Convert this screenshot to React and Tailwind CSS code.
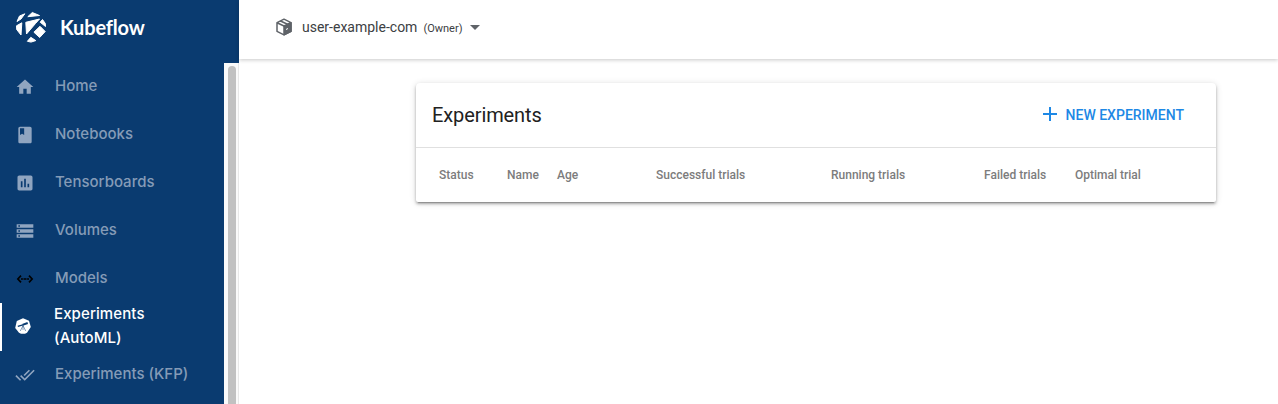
import React from "react";

const items = [
  { label: "Home", icon: "M10 20v-6h4v6h5v-8h3L12 3 2 12h3v8z" },
  { label: "Notebooks", icon: "M18 2H6c-1.100 0-2 .9-2 2v16c0 1.100.9 2 2 2h12c1.100 0 2-.9 2-2V4c0-1.100-.9-2-2-2zM6 4h5v8l-2.500-1.500L6 12V4z" },
  { label: "Tensorboards", icon: "M19 3H5c-1.100 0-2 .9-2 2v14c0 1.100.9 2 2 2h14c1.100 0 2-.9 2-2V5c0-1.100-.9-2-2-2zM9 17H7v-7h2v7zm4 0h-2V7h2v10zm4 0h-2v-4h2v4z" },
  { label: "Volumes", icon: "M2 20h20v-4H2v4zm2-3h2v2H4v-2zM2 4v4h20V4H2zm4 3H4V5h2v2zm-4 7h20v-4H2v4zm2-3h2v2H4v-2z" },
  { label: "Models", dark: true },
  { label: "Experiments (AutoML)", active: true },
  { label: "Experiments (KFP)", icon: "M18 7l-1.410-1.410-6.340 6.340 1.410 1.410L18 7zm4.240-1.410L11.660 16.170 7.480 12l-1.410 1.410L11.660 19l12-12-1.420-1.410zM.41 13.410L6 19l1.410-1.410L1.830 12 .41 13.410z" },
];

function Logo() {
  return (
    <svg className="h-8 w-8 shrink-0" viewBox="0 0 32 32" fill="white" stroke="white" strokeWidth="1" strokeLinejoin="round">
      <path d="M12.800 5.700 17.300 1.500 24.500 4.500z" />
      <path d="M2 10.500 4.500 5 9.800 2.800 6 8z" />
      <path d="M1.500 14.800 6.800 11.800 6 24 1.700 18.500z" />
      <path d="M10.800 11.300 24.500 8 20.500 12.500 11.500 23z" />
      <path d="M27.500 8.500 30.300 12.500 30.500 15.500 25.200 11.200z" />
      <path d="m25 15.300 5.200 5.200-5.500 6-5.800-5.300z" />
      <path d="m15.800 26.300 5 3.300-4.800 1.500-3.600-.8z" />
    </svg>
  );
}

function Telescope() {
  return (
    <svg className="h-4 w-4" viewBox="0 0 16 16">
      <path d="M8 .2 14 2.800 15.800 9 12 14.800 10 15.700H6L4 14.800.2 10 1.800 3z" fill="white" />
      <path d="m2.800 8.300 5-1.500" stroke="#0a3b70" strokeWidth="1.300" />
      <path d="m7.500 6.900 5.200-1.900" stroke="#0a3b70" strokeWidth="2" />
      <path d="M8 7.500 5.300 13M8 7.500v4.500M8 7.500l2.700 5.500" fill="none" stroke="#0a3b70" strokeWidth=".5" />
    </svg>
  );
}

function Icon({ item }) {
  if (item.active) return <Telescope />;
  if (item.dark) {
    return (
      <svg viewBox="0 0 20 20" className="h-5 w-5 shrink-0" fill="none" stroke="black" strokeWidth="1.700">
        <path d="M6 6.700 2.900 10 6 13.300M14 6.700 17.100 10 14 13.300" />
        <path d="M6 10h1.900M8.500 10h3M12.100 10H14" />
      </svg>
    );
  }
  return <svg viewBox="0 0 24 24" className="h-5 w-5 shrink-0 fill-[#90a5c0]"><path d={item.icon} /></svg>;
}

function NavItem({ item }) {
  return (
    <li className={`flex h-12 items-center text-[15px] font-medium leading-6 ${item.active ? "border-l-2 border-white pl-[11px] text-white" : "pl-[15px] text-[#859bb7]"}`}>
      <span className={`flex w-5 shrink-0 justify-center ${item.active ? "pb-[3px]" : ""}`}>
        <Icon item={item} />
      </span>
      <span className={`pb-[2px] ${item.active ? "ml-[21px] w-[120px] tracking-[0.1px]" : "ml-[20px] whitespace-nowrap"}`}>{item.label}</span>
    </li>
  );
}

export default function App() {
  return (
    <div className="flex h-[404px] overflow-hidden bg-white font-['Roboto',sans-serif] text-[#212121]">
      <aside className="flex w-[239px] shrink-0 flex-col bg-[#0a3b70]">
        <div className="flex h-[63px] shrink-0 items-start gap-[13px] pl-[15px] pt-[11px] font-['Lato',sans-serif] text-white">
          <Logo />
          <span className="text-[20px] font-bold leading-8 tracking-[-0.15px]">Kubeflow</span>
        </div>
        <div className="flex min-h-0 flex-1 font-['Inter',sans-serif]">
          <ul className="w-[224px] shrink-0">{items.map((item) => <NavItem key={item.label} item={item} />)}</ul>
          <div className="w-[15px] overflow-hidden border-r border-[#e8e8e8] bg-[#fafafa] pl-[4px] pt-[3px]">
            <div className="h-[500px] w-2 rounded-full bg-[#c1c1c1]" />
          </div>
        </div>
      </aside>
      <main className="min-w-0 flex-1">
        <header className="flex h-[59px] items-start pl-[37px] pt-[15px] text-[#3c4043] shadow-[0_1px_4px_rgba(0,0,0,0.22)]">
          <svg className="-ml-px mr-px mt-[3px] h-[18px] w-[18px]" viewBox="0 0 18 18" fill="none" stroke="#5f6368" strokeWidth="1.500" strokeLinejoin="round">
            <path d="M9 1.200 16 4.700v8.600L9 16.800l-7-3.500V4.700zM2 4.700 9 8l7-3.300M5.500 3 12.500 6.300" />
            <path d="M9 8v8.800l7-3.500V4.700z" fill="#5f6368" />
            <path d="m11 11.500 2-1" stroke="white" strokeWidth="1" />
          </svg>
          <span className="ml-2 text-[14px] leading-6">user-example-com</span>
          <span className="ml-[6px] pt-px text-[11px] leading-[25px]">(Owner)</span>
          <svg className="ml-[8px] mt-[10px] h-[5px] w-[10px]" viewBox="0 0 10 5"><path d="M0 0h10L5 5z" fill="#5f6368" /></svg>
        </header>
        <section className="ml-[177px] mt-6 h-[119px] w-[800px] rounded-[4px] rounded-b-[2px] bg-white shadow-[0_3px_1px_-2px_rgba(0,0,0,0.2),0_2px_3px_rgba(0,0,0,0.28),0_1px_7px_rgba(0,0,0,0.14)]">
          <div className="flex h-[65px] items-center justify-between border-b border-[#e0e0e0] pl-4 pr-8">
            <h1 className="text-[20px] leading-8 tracking-[-0.1px]">Experiments</h1>
            <button className="flex items-center gap-[8px] text-[14px] font-medium text-[#1e88e5]">
              <svg className="mb-[2px] mr-px h-[14px] w-[14px]" viewBox="0 0 14 14"><path d="M7 0v14M0 7h14" stroke="currentColor" strokeWidth="2" /></svg>
              NEW EXPERIMENT
            </button>
          </div>
          <div className="grid h-[54px] grid-cols-[68px_50px_99px_175px_153px_91px_auto] items-center pl-[23px] text-[12px] font-medium text-[#7c7c7c]">
            {["Status", "Name", "Age", "Successful trials", "Running trials", "Failed trials", "Optimal trial"].map((name) => <span key={name}>{name}</span>)}
          </div>
        </section>
      </main>
    </div>
  );
}
